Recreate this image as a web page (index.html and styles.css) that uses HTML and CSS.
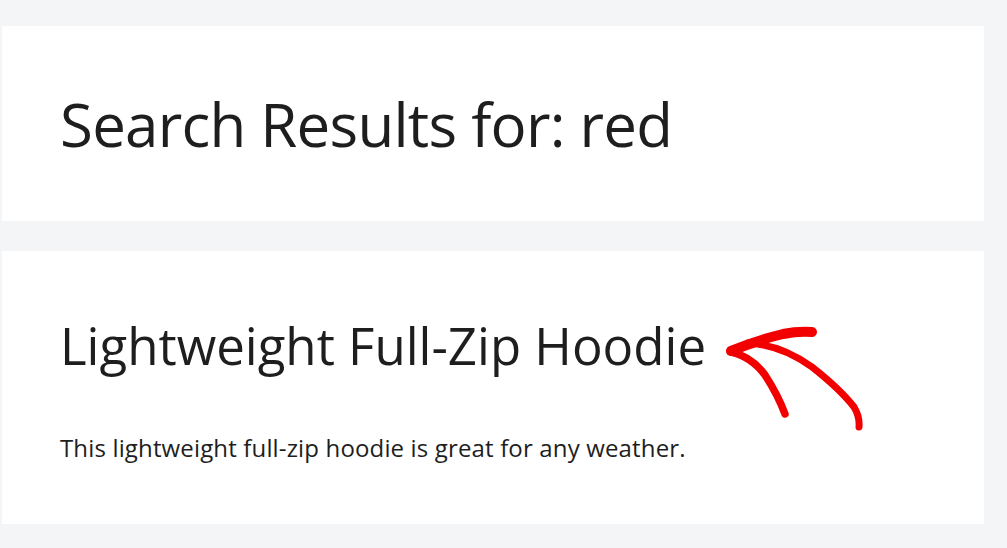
FILE: index.html
```html
<!DOCTYPE html>
<html lang="en">
  <head>
    <meta charset="UTF-8" />
    <title>Search Results for: red</title>
    <link rel="stylesheet" href="styles.css">
  </head>
  <body>
    <main class="page">
      <header class="card card-head">
        <h1 class="page-title">Search Results for: red</h1>
      </header>

      <article class="card card-result">
        <h2 class="result-title">Lightweight Full-Zip Hoodie</h2>
        <p class="result-text">This lightweight full-zip hoodie is great for any weather.</p>

        <!-- hand drawn annotation -->
        <svg class="arrow" width="160" height="120" viewBox="720 320 160 120">
          <path d="M731,352 Q758,341 783,335 Q798,332 812,333" fill="none" stroke="#f20000" stroke-width="10" stroke-linecap="round" />
          <path d="M731,353 Q752,358 765,376 Q778,396 785,415" fill="none" stroke="#f20000" stroke-width="7.5" stroke-linecap="round" />
          <path d="M748,344 Q782,346 812,368 Q840,390 854,408 Q860,418 859,428" fill="none" stroke="#f20000" stroke-width="7" stroke-linecap="round" />
        </svg>
      </article>
    </main>
  </body>
</html>
```

FILE: styles.css
```css
body {
  margin: 0;
  background: #f4f5f7;
  font-family: "Open Sans", "Noto Sans", sans-serif;
  color: #1e1e1e;
}
.page {
  display: flex;
  flex-direction: column;
  gap: 30px;
  padding: 26px 23px 24px 2px;
}
.card {
  background: #fff;
  padding: 0 40px 0 58px;
}
.card-head {
  height: 195px;
  display: flex;
  align-items: center;
}
.page-title {
  margin: 0;
  font-size: 60px;
  font-weight: 400;
  letter-spacing: -0.75px;
}
.card-result {
  position: relative;
  height: 273px;
  box-sizing: border-box;
  padding-top: 60px;
}
.result-title {
  margin: 0;
  font-size: 51px;
  font-weight: 400;
  line-height: 68px;
}
.result-text {
  margin: 52px 0 0;
  font-size: 24px;
  letter-spacing: 0.15px;
}
.arrow {
  position: absolute;
  left: 718px;
  top: 68px;
}
```
